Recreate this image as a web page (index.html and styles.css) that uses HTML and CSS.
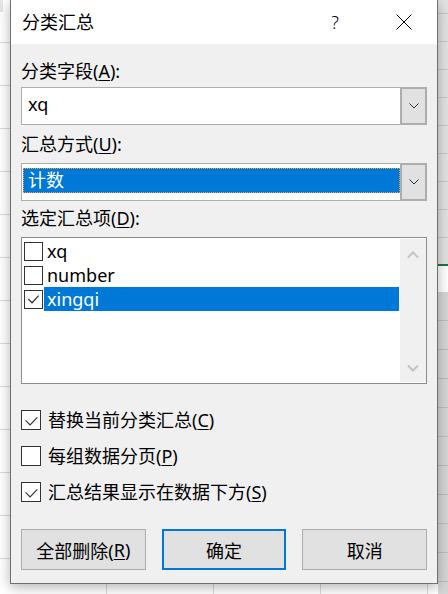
FILE: index.html
```html
<!DOCTYPE html>
<html lang="zh-CN">
<head>
<meta charset="utf-8">
<title>分类汇总</title>
<link rel="stylesheet" href="styles.css">
</head>
<body>
<div class="desk">
  <div class="strip-left"></div>
  <div class="dialog">
    <div class="titlebar">
      <div class="title">分类汇总</div>
      <div class="cap cap-help">?</div>
      <div class="cap cap-close">
        <svg width="16" height="16" viewBox="0 0 16 16"><path d="M0.5 0.5 L15.5 15.5 M15.5 0.5 L0.5 15.5" stroke="#000" stroke-width="1" fill="none"/></svg>
      </div>
    </div>
    <div class="content">
      <div class="label l1">分类字段(<u>A</u>):</div>
      <div class="combo c1">
        <div class="field"><span class="val">xq</span></div>
        <div class="drop"><svg width="10" height="6" viewBox="0 0 10 6"><path d="M0.5 0.5 L5 5 L9.5 0.5" stroke="#333" stroke-width="1" fill="none"/></svg></div>
      </div>
      <div class="label l2">汇总方式(<u>U</u>):</div>
      <div class="combo c2">
        <div class="field"><span class="val sel">计数</span></div>
        <div class="drop"><svg width="10" height="6" viewBox="0 0 10 6"><path d="M0.5 0.5 L5 5 L9.5 0.5" stroke="#333" stroke-width="1" fill="none"/></svg></div>
      </div>
      <div class="label l3">选定汇总项(<u>D</u>):</div>
      <div class="listbox">
        <div class="items">
          <div class="item"><span class="cb"></span><span class="itext">xq</span></div>
          <div class="item"><span class="cb"></span><span class="itext">number</span></div>
          <div class="item"><span class="cb"><svg width="18" height="18" viewBox="0 0 18 18"><path d="M3.5 9 L7.5 13 L14.5 5.5" stroke="#333" stroke-width="1.3" fill="none"/></svg></span><span class="itext hi">xingqi</span></div>
        </div>
        <div class="vscroll">
          <svg width="12" height="8" viewBox="0 0 12 8"><path d="M1 6.5 L6 1.5 L11 6.5" stroke="#c4c4c4" stroke-width="2" fill="none"/></svg>
          <svg width="12" height="8" viewBox="0 0 12 8"><path d="M1 1.5 L6 6.5 L11 1.5" stroke="#c4c4c4" stroke-width="2" fill="none"/></svg>
        </div>
      </div>
      <div class="opts">
        <div class="opt"><span class="box"><svg width="20" height="20" viewBox="0 0 20 20"><path d="M4 10.5 L9 15.5 L17 7" stroke="#333" stroke-width="1.3" fill="none"/></svg></span><span>替换当前分类汇总(<u>C</u>)</span></div>
        <div class="opt"><span class="box"></span><span>每组数据分页(<u>P</u>)</span></div>
        <div class="opt"><span class="box"><svg width="20" height="20" viewBox="0 0 20 20"><path d="M4 10.5 L9 15.5 L17 7" stroke="#333" stroke-width="1.3" fill="none"/></svg></span><span>汇总结果显示在数据下方(<u>S</u>)</span></div>
      </div>
      <div class="buttons">
        <div class="btn">全部删除(<u>R</u>)</div>
        <div class="btn def">确定</div>
        <div class="btn">取消</div>
      </div>
    </div>
  </div>
  <div class="strip-right">
    <div class="rs-top"></div>
    <div class="rs-sel"></div>
    <div class="rs-cells"></div>
  </div>
</div>
</body>
</html>
```

FILE: styles.css
```css
* { box-sizing: border-box; }
html, body { margin: 0; padding: 0; }
body {
  width: 448px;
  height: 594px;
  overflow: hidden;
  background: #fff;
  font-family: "Noto Sans", "Noto Sans CJK SC", sans-serif;
  color: #000;
}
u { text-decoration: underline; text-underline-offset: 2px; text-decoration-thickness: 1px; }

.desk {
  display: flex;
  align-items: flex-start;
  height: 594px;
  overflow: hidden;
  background:
    repeating-linear-gradient(to right, transparent 0, transparent 106px, #dadada 106px, #dadada 107px) 0 0 / 100% 100%,
    #fff;
}

.strip-left {
  width: 10px;
  height: 594px;
  flex: none;
  background:
    linear-gradient(#e6e6e6, #e6e6e6) 0 0 / 3px 12px no-repeat,
    repeating-linear-gradient(to bottom, transparent 0, transparent 42px, #d9d9d9 42px, #d9d9d9 43px) 0 0 / 100% 100%,
    #fff;
}

.dialog {
  width: 428px;
  height: 584px;
  flex: none;
  border: 1px solid #707070;
  border-top: 0;
  background: #f0f0f0;
  box-shadow: 0 3px 12px rgba(0, 0, 0, 0.3);
  position: relative;
  z-index: 1;
}

.titlebar {
  height: 44px;
  background: #fff;
  display: flex;
  align-items: center;
}
.title {
  flex: 1;
  padding-left: 11px;
  font-size: 18px;
  line-height: 24px;
}
.cap {
  height: 44px;
  display: flex;
  align-items: center;
  justify-content: center;
}
.cap-help {
  width: 72px;
  font-family: "Noto Sans", sans-serif;
  font-size: 18px;
  font-weight: 300;
}
.cap-close { width: 66px; }

.content {
  padding: 15px 10px 0 10px;
  font-size: 18px;
}
.label {
  line-height: 24px;
  height: 24px;
  white-space: nowrap;
}
.l2 { margin-top: 7px; }
.l3 { margin-top: 5px; }

.combo {
  margin-top: 4px;
  height: 38px;
  display: flex;
  border: 1px solid #adadad;
  background: #fff;
}
.c2 { margin-top: 7px; }
.field {
  flex: 1;
  padding: 4px 0 0 1px;
}
.val {
  display: inline-block;
  height: 25px;
  line-height: 23px;
  padding: 0 3px 0 4px;
  border: 1px solid transparent;
}
.sel {
  display: block;
  background: #0078d7;
  color: #fff;
  border: 1px dotted #f5a623;
}
.drop {
  width: 27px;
  margin: -1px -1px -1px 0;
  background: #e1e1e1;
  border: 2px solid #adadad;
  display: flex;
  align-items: center;
  justify-content: center;
}

.listbox {
  margin-top: 7px;
  height: 147px;
  display: flex;
  border: 1px solid #8c8c8c;
  background: #fff;
}
.items {
  flex: 1;
  padding: 1px 0 0 2px;
}
.item {
  height: 24px;
  display: flex;
  align-items: center;
}
.cb {
  width: 19px;
  height: 19px;
  border: 1px solid #333;
  flex: none;
  display: flex;
  align-items: center;
  justify-content: center;
}
.itext {
  margin-left: 1px;
  padding-left: 3px;
  line-height: 24px;
  height: 24px;
}
.hi {
  flex: 1;
  background: #0078d7;
  color: #fff;
}
.vscroll {
  width: 26px;
  background: #f0f0f0;
  display: flex;
  flex-direction: column;
  align-items: center;
  justify-content: space-between;
  padding: 12px 0 10px;
  margin: 1px 0 1px 1px;
}

.opts {
  margin-top: 24px;
  display: flex;
  flex-direction: column;
  gap: 12px;
}
.opt {
  height: 24px;
  line-height: 24px;
  display: flex;
  align-items: center;
  white-space: nowrap;
}
.box {
  width: 20px;
  height: 20px;
  border: 1px solid #333;
  background: #fff;
  flex: none;
  margin-right: 7px;
  display: flex;
  align-items: center;
  justify-content: center;
}

.buttons {
  margin-top: 25px;
  display: grid;
  grid-template-columns: repeat(3, 1fr);
  gap: 16px;
}
.btn {
  height: 41px;
  background: #e1e1e1;
  border: 1px solid #adadad;
  display: flex;
  align-items: center;
  justify-content: center;
  white-space: nowrap;
}
.btn.def { border: 2px solid #0078d7; }

.strip-right {
  width: 10px;
  height: 594px;
  flex: none;
  display: flex;
  flex-direction: column;
}
.rs-top {
  height: 264px;
  flex: none;
  background:
    repeating-linear-gradient(to bottom, #e2e2e2 0, #e2e2e2 13px, #c8c8c8 13px, #c8c8c8 14px, #e2e2e2 14px, #e2e2e2 28px),
    #e2e2e2;
}
.rs-sel {
  height: 28px;
  flex: none;
  border-top: 2px solid #217346;
  background: #fff;
}
.rs-cells {
  flex: 1;
  background:
    repeating-linear-gradient(to bottom, #d6d6d6 0, #d6d6d6 28px, #bdbdbd 28px, #bdbdbd 29px),
    #d6d6d6;
}
```
